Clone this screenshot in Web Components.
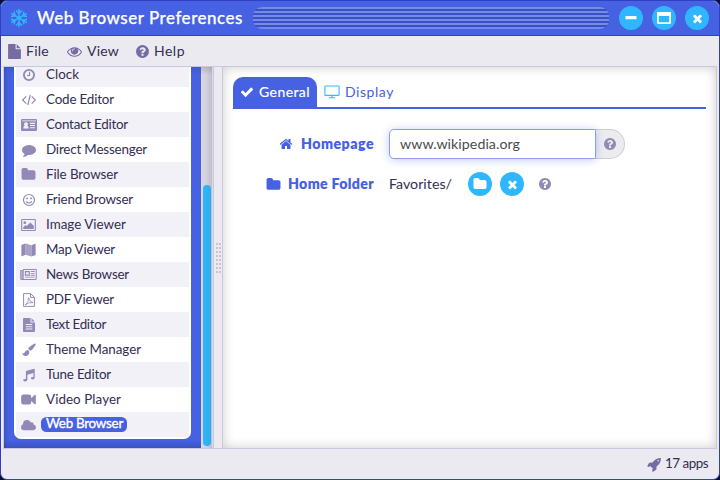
<!DOCTYPE html>
<html lang="en">
<head>
<meta charset="utf-8">
<title>Web Browser Preferences</title>
<style>
html,body{margin:0;height:100%;background:#0b1030;overflow:hidden}
body{font-family:Lato,"Open Sans",sans-serif;font-size:13.4px;color:#332e52}
</style>
</head>
<body>
<app-window>
  <title-bar slot="title" heading="Web Browser Preferences" width="206"></title-bar>
  <menu-bar slot="menu"></menu-bar>
  <app-list slot="side"></app-list>
  <prefs-pane slot="main"></prefs-pane>
  <status-bar slot="status"></status-bar>
</app-window>
<script>
const ICONS = {
 snow:[20,20,'<g fill="none" stroke="currentColor" stroke-width="1.500"><path d="M10 1v18M7 2.500l3 3 3-3M7 17.500l3-3 3 3"/><path d="M10 1v18M7 2.500l3 3 3-3M7 17.500l3-3 3 3" transform="rotate(60 10 10)"/><path d="M10 1v18M7 2.500l3 3 3-3M7 17.500l3-3 3 3" transform="rotate(120 10 10)"/></g>'],
 file:[1792,1792,'<path d="M1152 512v-472q22 14 36 28l408 408q14 14 28 36h-472zm-128 32q0 40 28 68t68 28h544v1056q0 40-28 68t-68 28h-1344q-40 0-68-28t-28-68v-1600q0-40 28-68t68-28h800v544z"/>'],
 eye:[1792,1792,'<path d="M1664 960q-152-236-381-353 61 104 61 225 0 185-131.500 316.500t-316.500 131.500-316.500-131.500-131.500-316.500q0-121 61-225-229 117-381 353 133 205 333.500 326.500t434.500 121.500 434.500-121.500 333.500-326.500zm-720-384q0-20-14-34t-34-14q-125 0-214.500 89.500t-89.500 214.500q0 20 14 34t34 14 34-14 14-34q0-86 61-147t147-61q20 0 34-14t14-34zm848 384q0 34-20 69-140 230-376.500 368.500t-499.500 138.500-499.500-139-376.500-368q-20-35-20-69t20-69q140-229 376.500-368t499.500-139 499.500 139 376.500 368q20 35 20 69z"/>'],
 help:[1792,1792,'<path d="M1024 1376v-192q0-14-9-23t-23-9h-192q-14 0-23 9t-9 23v192q0 14 9 23t23 9h192q14 0 23-9t9-23zm256-672q0-88-55.500-163t-138.500-116-170-41q-243 0-371 213-15 24 8 42l132 100q7 6 19 6 16 0 25-12 53-68 86-92 34-24 86-24 48 0 85.500 26t37.500 59q0 38-20 61t-68 45q-63 28-115.500 86.500t-52.500 125.500v36q0 14 9 23t23 9h192q14 0 23-9t9-23q0-19 21.500-49.500t54.500-49.500q32-18 49-28.500t46-35 44.500-48 28-60.500 12.500-81zm384 192q0 209-103 385.500t-279.500 279.500-385.500 103-385.500-103-279.500-279.500-103-385.500 103-385.500 279.500-279.500 385.500-103 385.500 103 279.500 279.500 103 385.500z"/>'],
 times:[1792,1792,'<path d="M1490 1322q0 40-28 68l-136 136q-28 28-68 28t-68-28l-294-294-294 294q-28 28-68 28t-68-28l-136-136q-28-28-28-68t28-68l294-294-294-294q-28-28-28-68t28-68l136-136q28-28 68-28t68 28l294 294 294-294q28-28 68-28t68 28l136 136q28 28 28 68t-28 68l-294 294 294 294q28 28 28 68z"/>'],
 check:[1792,1792,'<path d="M1671 566q0 40-28 68l-724 724-136 136q-28 28-68 28t-68-28l-136-136-362-362q-28-28-28-68t28-68l136-136q28-28 68-28t68 28l294 295 656-657q28-28 68-28t68 28l136 136q28 28 28 68z"/>'],
 home:[1792,1792,'<path d="M1472 992v480q0 26-19 45t-45 19h-384v-384h-256v384h-384q-26 0-45-19t-19-45v-480q0-1 .5-3t.5-3l575-474 575 474q1 2 1 6zm223-69l-62 74q-8 9-21 11h-3q-13 0-21-7l-692-577-692 577q-12 8-24 7-13-2-21-11l-62-74q-8-10-7-23.500t11-21.500l719-599q32-26 76-26t76 26l244 204v-195q0-14 9-23t23-9h192q14 0 23 9t9 23v408l219 182q10 8 11 21.500t-7 23.500z"/>'],
 folder:[1792,1792,'<path d="M1728 608v704q0 92-66 158t-158 66h-1216q-92 0-158-66t-66-158v-960q0-92 66-158t158-66h320q92 0 158 66t66 158v32h672q92 0 158 66t66 158z"/>'],
 comment:[1792,1792,'<path d="M1792 896q0 174-120 321.500t-326 233-450 85.500q-70 0-145-8-198 175-460 242-49 14-114 22-17 2-30.500-9t-17.500-29v-1q-3-4-.5-12t2-10 4.500-9.500l6-9 7-8.500 8-9q7-8 31-34.500t34.500-38 31-39.500 32.500-51 27-59 26-76q-157-89-247.500-220t-90.500-281q0-130 71-248.500t191-204.500 286-136.500 348-50.500q244 0 450 85.500t326 233 120 321.500z"/>'],
 rocket:[1792,1792,'<path d="M1440 448q0-40-28-68t-68-28-68 28-28 68 28 68 68 28 68-28 28-68zm224-288q0 249-75.500 430.500t-253.500 360.500q-81 80-195 176l-20 379q-2 16-16 26l-384 224q-7 4-16 4-12 0-23-9l-64-64q-13-14-8-32l85-276-281-281-276 85q-3 1-9 1-14 0-23-9l-64-64q-17-19-5-39l224-384q10-14 26-16l379-20q96-114 176-195 188-187 358-258t431-71q14 0 24 9.500t10 22.500z"/>'],
 clock:[14,14,'<g fill="none" stroke="currentColor"><circle cx="7" cy="7" r="5.100" stroke-width="1.900"/><path d="M7.500 3.800v3.700H5" stroke-width="1.100"/></g>'],
 code:[16,14,'<g fill="none" stroke="currentColor" stroke-width="1.200"><path d="M5.300 3.300L1.600 7l3.700 3.700M10.700 3.300L14.400 7l-3.700 3.700M9.300 2L6.700 12"/></g>'],
 card:[16,12,'<path fill-rule="evenodd" d="M1.200 0h13.600Q16 0 16 1.200v9.600Q16 12 14.800 12H1.200Q0 12 0 10.800V1.200Q0 0 1.200 0zM1 1.500v.8h14v-.8zM2.300 9.500h5.400q0-2.800-1.500-2.800Q7 6 7 5q0-1.700-2-1.700T3 5q0 1 .8 1.700-1.500 0-1.500 2.800zM9 3.800V5h5V3.800zM9 6v1h5V6zM9 8.200v1h5v-1z"/>'],
 smile:[14,14,'<g fill="none" stroke="currentColor" stroke-width="1.200"><circle cx="7" cy="7" r="5.500"/><path d="M4.200 8.500q2.800 3 5.600 0"/></g><circle cx="5" cy="5.400" r=".95"/><circle cx="9" cy="5.400" r=".95"/>'],
 image:[16,13,'<path fill-rule="evenodd" d="M1.200 0h13.600Q16 0 16 1.200v10.600Q16 13 14.800 13H1.200Q0 13 0 11.800V1.200Q0 0 1.200 0zM1.200 1.200v10.600h13.600V1.200z"/><circle cx="4" cy="4" r="1.500"/><path d="M2.300 10.800V9l2.500-2.500L6 7.700l4-4 3.700 3.700v3.400z"/>'],
 map:[16,14,'<path d="M.4 2Q.4 1.700 1 1.400L4.900 0v12L.9 13.700Q.4 13.900.4 13.400zM11.100 2L15 .2q.6-.2.600.4V12q0 .3-.6.500L11.100 14z"/><path opacity=".8" d="M4.900 0l6.200 2v12l-6.200-2z"/>'],
 news:[18,12,'<path fill-rule="evenodd" d="M3 0h14q1 0 1 1v9.500q0 1.500-1.500 1.500h-15Q0 12 0 10.500V2q0-1 1-1h2zM3.700 1.100v9.700h12.700q.5 0 .5-.5V1.100zM1 2v8.500q0 .5.500.500h1V2z"/><path opacity=".6" d="M.5 1.500h2.700v10H1z"/><path fill-rule="evenodd" d="M5 2.300h5.500v5H5zM6.200 3.500v2.600h3.100V3.500zM11.500 2.300h4.300v1h-4.300zM11.500 4.300h4.300v1h-4.300zM11.500 6.300h4.300v1h-4.300zM5 8.400h10.800v1H5z"/>'],
 pdf:[12,14,'<g fill="none" stroke="currentColor"><path d="M.6.600h7l3.800 3.700v9.100H.6zM7.500.6v3.800h3.900" stroke-width="1"/><path d="M2.300 12Q6 9 5.500 4.600 6.300 8.800 10 9.600 5.600 8.800 2.300 12z" stroke-width=".8"/></g>'],
 text:[12,14,'<path fill-rule="evenodd" d="M1 0h6.500v4.500H12V13q0 1-1 1H1q-1 0-1-1V1Q0 0 1 0zM2.700 6v1h6.600V6zM2.700 8.200v1h6.600v-1zM2.700 10.400v1h6.600v-1zM8.400.2l3.400 3.400H8.400z"/>'],
 brush:[16,16,'<path d="M14.400.7q.9-.3 1.200.5.200.7-.5 1.600-2.600 4.200-4.300 5.500-.9.700-1.700.3L7.400 7.100q-.4-.7.300-1.600 2.500-2.700 6.700-4.800zM6.700 8l1.700 1.700q.2 4.500-3.900 5.200Q.9 15.500.3 11.200q1.600 1.200 2.300.3Q3.800 8.100 6.700 8z"/>'],
 music:[14,14,'<path d="M4.200 2.800L13 .2q.7-.1.700.5v9.200q0 1.900-2.300 1.900-1.900 0-1.900-1.200 0-1.500 2.500-1.500h.3V4.800L5.800 6.700v5.200q0 2-2.600 2-2 0-2-1.200 0-1.500 2.600-1.500l.4 0V3.300z"/>'],
 video:[16,12,'<path d="M2.500.5h6Q11 .5 11 3v1.500l3.800-3.600Q16 .5 16 1.500v9q0 1-1.200.6L11 7.500V9q0 2.500-2.500 2.500h-6Q0 11.500 0 9V3Q0 .5 2.500.5z"/>'],
 cloud:[16,12,'<path d="M3.300 11.500Q0 11.500 0 8.300 0 6 2.200 5 2 .700 6.400.7 9.400.700 10.500 3.300q2.800-.8 3 2.200Q16 6.200 16 8.500q0 3-3 3z"/>'],
 monitor:[16,14,'<path fill="none" stroke="currentColor" stroke-width="1.100" d="M1.500 1h13q.6 0 .6.6v8.200q0 .6-.6.6h-13q-.6 0-.6-.6V1.600Q.9 1 1.500 1zM8 10.500v2M4.700 12.800h6.600"/>'],
 min:[12,12,'<rect x=".5" y="4" width="11" height="3.300" rx=".6"/>'],
 max:[14,12,'<path fill-rule="evenodd" d="M1 0h12q1 0 1 1v10q0 1-1 1H1q-1 0-1-1V1q0-1 1-1zM1.800 4v6.200h10.400V4z"/>']
};
const make = (tag, render) => customElements.define(tag, class extends HTMLElement {
  connectedCallback(){
    if(this.shadowRoot) return;
    this.attachShadow({mode:'open'}).innerHTML = render(this);
  }
});
const icon = (n,w,h=w,s='') => `<ui-icon name="${n}" style="width:${w}px;height:${h}px;${s}"></ui-icon>`;
const fit = (t,w,s='') => `<fit-text width="${w}" style="${s}">${t}</fit-text>`;

make('ui-icon', el => {
  const [w,h,body] = ICONS[el.getAttribute('name')];
  return `<style>:host{display:block;flex:none}svg{display:block;width:100%;height:100%;fill:currentColor;overflow:visible}</style><svg viewBox="0 0 ${w} ${h}">${body}</svg>`;
});

make('app-window', () => `<style>
:host{display:grid;box-sizing:border-box;width:720px;height:480px;grid-template-rows:35px 30px 383px 1fr;border:1px solid #3140c3;border-radius:7px;background:#ebeaf1;overflow:hidden}
.body{display:grid;grid-template-columns:209px 8px 493px;gap:1px;margin:0 2px;border:1px solid #cbc7de;background:#cbc7de;height:381px;overflow:hidden}
.split{background:#ebeaf1;display:grid;grid-template-columns:2px 2px;gap:2px 1px;align-content:center;padding-left:1px;justify-content:center}
.split i{width:2px;height:2px;background:#c7c6cd}
::slotted(*){min-width:0;min-height:0}
</style><slot name="title"></slot><slot name="menu"></slot>
<div class="body"><slot name="side"></slot><div class="split">${'<i></i>'.repeat(16)}</div><slot name="main"></slot></div>
<slot name="status"></slot>`);

make('round-button', el => `<style>:host{display:grid;place-items:center;width:24px;height:24px;border-radius:50%;background:#2fb6fe;color:#fff;flex:none}</style><slot></slot>`);

make('title-bar', el => `<style>
:host{display:flex;align-items:center;box-sizing:border-box;padding:0 10px 0 8px;background:#4661e1;border-bottom:1px solid #3140c3;color:#fff}
.name{font-size:17px;font-weight:500;margin-left:8px;-webkit-text-stroke:.25px #fff}
.grip{flex:1;height:22px;margin:0 10px;border-radius:9px;background:repeating-linear-gradient(#748be9 0 2px,#3b51c1 2px 4px)}
.buttons{display:flex;gap:9px}
</style>${icon('snow',20,20,'color:#2fb6fe')}<span class="name">${fit(el.getAttribute('heading'),el.getAttribute('width'))}</span><div class="grip"></div>
<div class="buttons"><round-button>${icon('min',12)}</round-button><round-button>${icon('max',14,12)}</round-button><round-button>${icon('times',13)}</round-button></div>`);

make('menu-bar', () => `<style>
:host{display:flex;align-items:center;padding-left:6px;font-size:14px;color:#332e52}
ui-icon{color:#776ba3}
</style>${icon('file',15,15)}${fit('File',23,'margin-left:4px')}
${icon('eye',15,15,'margin-left:18px')}${fit('View',32,'margin-left:5px')}
${icon('help',15,15,'margin-left:16px')}${fit('Help',31,'margin-left:4px')}`);

make('app-row', el => `<style>
:host{display:flex;align-items:center;height:25px;background:#fff}
:host(:nth-child(odd)){background:#f2f1f7}
.i{width:25px;display:grid;place-items:center;color:#9389b7}
.t{margin-left:5px;display:block}
:host([selected]) .t{background:#4661e1;color:#fff;border-radius:5.500px;height:15px;line-height:15px;padding:0 4px 0 5px;margin-left:0;-webkit-text-stroke:.35px #fff}
</style><div class="i"><slot name="icon"></slot></div><span class="t"><slot></slot></span>`);

const APPS = [['Clock',33,'clock',14,14],['Code Editor',68,'code',16,14],['Contact Editor',82,'card',16,12],['Direct Messenger',101,'comment',14,14],['File Browser',72,'folder',15,15],['Friend Browser',87,'smile',14,14],['Image Viewer',80,'image',15,12],['Map Viewer',69,'map',15,14],['News Browser',83,'news',17,11],['PDF Viewer',68,'pdf',12,14],['Text Editor',60,'text',12,14],['Theme Manager',95,'brush',14,14],['Tune Editor',65,'music',13,14],['Video Player',75,'video',15,11],['Web Browser',77,'cloud',15,12]];
make('app-list', () => `<style>
:host{display:flex;background:linear-gradient(#0001,#0000 8px,#0000 calc(100% - 8px),#0002),#4661e1;align-items:stretch}
.wrap{width:197px;box-sizing:border-box;padding:0 10px 9px;display:flex;flex-direction:column;justify-content:flex-end;overflow:hidden;box-shadow:inset 4px 0 5px -3px #0003}
.list{background:#fff;padding:0 2px 2px;border-radius:0 0 7px 7px;overflow:hidden;flex:none}
.track{width:8px;padding:118px 1px 2px 2px;border-right:1px solid #dcd9e6;background:linear-gradient(#0002,#0000 8px),linear-gradient(90deg,#dbd8e5,#d2cfdc 50%,#c1bec9)}
.thumb{height:261px;border-radius:4px;background:linear-gradient(90deg,#2fb6fd,#2aaeee)}
</style><div class="wrap"><div class="list">${APPS.map(([n,w,i,a,b])=>`<app-row ${n=='Web Browser'?'selected':''}>${icon(i,a,b).replace('<ui-icon','<ui-icon slot="icon"')}${fit(n,w)}</app-row>`).join('')}</div></div><div class="track"><div class="thumb"></div></div>`);

make('prefs-pane', () => `<style>
:host{display:block;box-sizing:border-box;background:#fff;box-shadow:inset 0 0 12px #0003;padding:10px 10px 0}
.tabs{display:flex;height:30px;border-bottom:2px solid #4661e1;font-size:14px;color:#4661e1;align-items:stretch}
.tab{display:flex;align-items:center}
.on{width:84px;box-sizing:border-box;background:#4661e1;color:#fff;border-radius:10px 10px 0 0;padding-left:7px;-webkit-text-stroke:.2px #fff}
form{display:grid;grid-template-columns:141px 1fr;column-gap:15px;grid-template-rows:30px 30px;row-gap:10px;margin-top:20px;font-size:14.200px}
.label{display:flex;align-items:center;justify-content:flex-end;color:#4661e1;font-weight:800}
.field{display:flex;align-items:center}
.input{width:207px;height:30px;box-sizing:border-box;border:1px solid #8f9fe5;border-radius:5px 0 0 5px;background:#fff;box-shadow:0 1px 9px #4661e155;padding-left:10px;display:flex;align-items:center;color:#4a4a50;z-index:1}
.help{width:29px;height:30px;box-sizing:border-box;border:1px solid #cecdd2;border-left:0;border-radius:0 15px 15px 0;background:#ececee;display:flex;align-items:center;padding-left:7px}
</style><div class="tabs"><div class="tab on">${icon('check',14)}${fit('General',51,'margin-left:5px')}</div><div class="tab">${icon('monitor',16,14,'color:#38b9fc;margin-left:7px')}${fit('Display',49,'margin-left:5px')}</div></div>
<form><div class="label">${icon('home',14)}${fit('Homepage',73,'margin-left:8px')}</div>
<div class="field"><div class="input">${fit('www.wikipedia.org',120)}</div><div class="help">${icon('help',14,14,'color:#9389b7')}</div></div>
<div class="label">${icon('folder',15)}${fit('Home Folder',86,'margin-left:7px')}</div>
<div class="field">${fit('Favorites/',63)}<round-button style="margin-left:16px">${icon('folder',14)}</round-button><round-button style="margin-left:8px">${icon('times',13)}</round-button>${icon('help',14,14,'color:#9389b7;margin-left:14px')}</div></form>`);

make('status-bar', () => `<style>:host{display:flex;align-items:center;justify-content:flex-end;padding:0 11px 0 0}</style>${icon('rocket',15,15,'color:#776ba3')}${fit('17 apps',43,'margin-left:3px')}`);

/* Text run spread to a given width through letter spacing. */
customElements.define('fit-text', class extends HTMLElement {
  connectedCallback(){
    if(this.shadowRoot) return;
    this.attachShadow({mode:'open'}).innerHTML = `<style>:host{display:inline-block;white-space:nowrap;flex:none;line-height:inherit}span{display:inline-block;transform:translateY(-1px)}</style><span><slot></slot></span>`;
    const s = this.shadowRoot.querySelector('span'), w = +this.getAttribute('width');
    this.style.width = w + 'px';
    s.style.letterSpacing = (w - s.getBoundingClientRect().width) / this.textContent.length + 'px';
  }
});
</script>
</body>
</html>
